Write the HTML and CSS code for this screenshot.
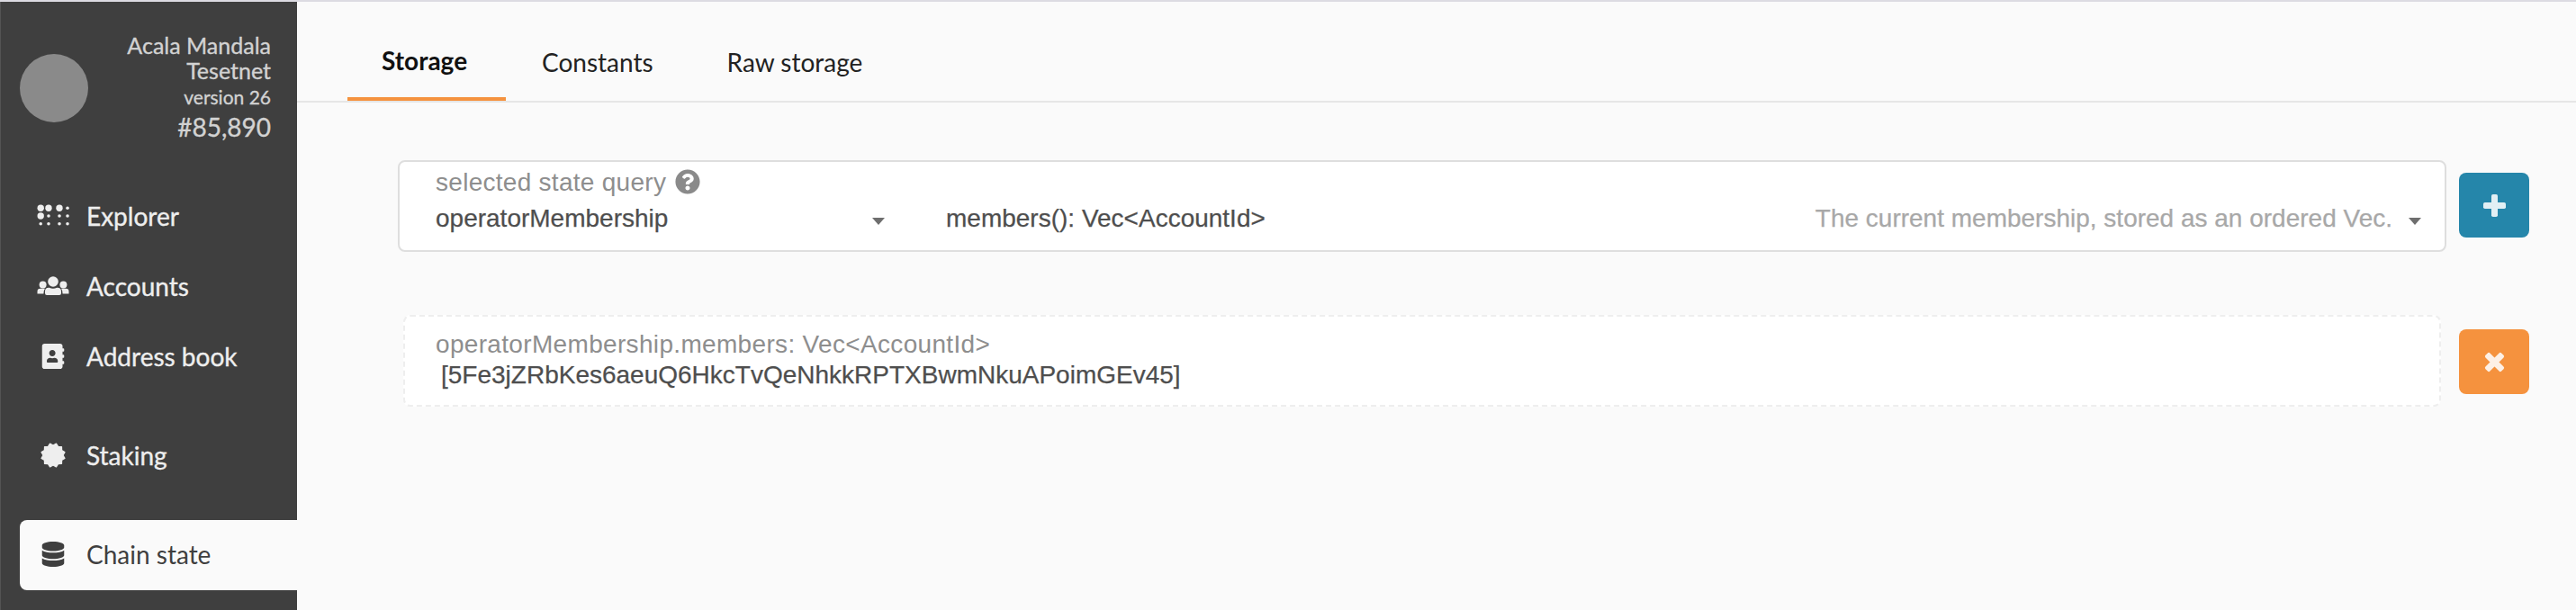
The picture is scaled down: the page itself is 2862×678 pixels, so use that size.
FILE: index.html
```html
<!DOCTYPE html>
<html lang="en">
<head>
<meta charset="utf-8">
<title>Chain state</title>
<link rel="stylesheet" href="styles.css">
</head>
<body>
<div class="app">
  <aside class="sidebar">
    <header class="chain">
      <span class="chain-logo"></span>
      <div class="chain-info">
        <div class="chain-name">Acala Mandala<br>Tesetnet</div>
        <div class="chain-version">version 26</div>
        <div class="chain-block">#85,890</div>
      </div>
    </header>
    <nav class="menu">
      <a class="menu-item">
        <svg class="icon" viewBox="0 0 36 28"><g transform="translate(0 1.500)"><circle cx="4.200" cy="3.700" r="3.700"/><circle cx="13" cy="3.700" r="3.700"/><circle cx="25" cy="3.700" r="3.700"/><circle cx="4.200" cy="12.500" r="3.700"/><circle cx="34" cy="3.700" r="1.800"/><circle cx="13" cy="12.500" r="1.800"/><circle cx="25" cy="12.500" r="1.800"/><circle cx="34" cy="12.500" r="1.800"/><circle cx="4.200" cy="21.300" r="1.800"/><circle cx="13" cy="21.300" r="1.800"/><circle cx="25" cy="21.300" r="1.800"/><circle cx="34" cy="21.300" r="1.800"/></g></svg>
        <span class="menu-label">Explorer</span>
      </a>
      <a class="menu-item">
        <svg class="icon" viewBox="0 0 36 28"><circle cx="6.600" cy="12.500" r="4"/><circle cx="29.400" cy="12.500" r="4"/><circle cx="18" cy="9" r="5.800"/><path d="M.5 22.500v-2.600q0-3.200 3.200-3.200h5.300q-1.400 1.500-1.600 5.800zM35.500 22.500v-2.600q0-3.200-3.200-3.200h-5.300q1.400 1.500 1.600 5.800zM9 22v-2q0-4.200 4.200-4.200h.6q4.200 1.800 8.400 0h.6q4.200 0 4.200 4.200v2q0 2-2 2h-14q-2 0-2-2z"/></svg>
        <span class="menu-label">Accounts</span>
      </a>
      <a class="menu-item">
        <svg class="icon" viewBox="-96 0 640 512"><path d="M436 160c6.600 0 12-5.400 12-12v-40c0-6.600-5.400-12-12-12h-20V48c0-26.500-21.500-48-48-48H48C21.500 0 0 21.500 0 48v416c0 26.500 21.500 48 48 48h320c26.500 0 48-21.500 48-48v-48h20c6.600 0 12-5.400 12-12v-40c0-6.600-5.400-12-12-12h-20v-64h20c6.600 0 12-5.400 12-12v-40c0-6.600-5.400-12-12-12h-20v-64h20zm-228-32c35.300 0 64 28.700 64 64s-28.700 64-64 64-64-28.700-64-64 28.700-64 64-64zm112 236.800c0 10.600-10 19.200-22.400 19.200H118.400C106 384 96 375.400 96 364.800v-19.200c0-31.800 30.100-57.600 67.200-57.600h5c12.300 5.100 25.700 8 39.800 8s27.600-2.900 39.800-8h5c37.100 0 67.200 25.800 67.200 57.600v19.200z"/></svg>
        <span class="menu-label">Address book</span>
      </a>
      <a class="menu-item spaced">
        <svg class="icon" viewBox="0 0 36 28"><path class="seal" d="M18 3L21.440 1.150 23.500 4.470 27.400 4.600 27.530 8.500 30.850 10.560 29 14 30.850 17.440 27.530 19.500 27.400 23.400 23.500 23.530 21.440 26.850 18 25 14.560 26.850 12.500 23.530 8.600 23.400 8.470 19.500 5.150 17.440 7 14 5.150 10.560 8.470 8.500 8.600 4.600 12.500 4.470 14.560 1.150z"/></svg>
        <span class="menu-label">Staking</span>
      </a>
      <a class="menu-item spaced active">
        <svg class="icon" viewBox="-96 0 640 512"><path d="M448 73.143v45.714C448 159.143 347.667 192 224 192S0 159.143 0 118.857V73.143C0 32.857 100.333 0 224 0s224 32.857 224 73.143zM448 176v102.857C448 319.143 347.667 352 224 352S0 319.143 0 278.857V176c48.125 33.143 136.208 48.572 224 48.572S399.874 209.143 448 176zm0 160v102.857C448 479.143 347.667 512 224 512S0 479.143 0 438.857V336c48.125 33.143 136.208 48.572 224 48.572S399.874 369.143 448 336z"/></svg>
        <span class="menu-label">Chain state</span>
      </a>
    </nav>
  </aside>
  <main class="content">
    <nav class="tabs">
      <a class="tab selected">Storage</a>
      <a class="tab">Constants</a>
      <a class="tab raw">Raw storage</a>
    </nav>
    <section class="row">
      <div class="query">
        <div class="module">
          <div class="label"><span class="label-text">selected state query</span><svg class="help" viewBox="0 0 512 512"><path d="M504 256c0 136.997-111.043 248-248 248S8 392.997 8 256C8 119.083 119.043 8 256 8s248 111.083 248 248zM262.655 90c-54.497 0-89.255 22.957-116.549 63.758-3.536 5.286-2.353 12.415 2.715 16.258l34.699 26.310c5.205 3.947 12.621 3.008 16.665-2.122 17.864-22.658 30.113-35.797 57.303-35.797 20.429 0 45.698 13.148 45.698 32.958 0 14.976-12.363 22.667-32.534 33.976C247.128 238.528 216 254.941 216 296v4c0 6.627 5.373 12 12 12h56c6.627 0 12-5.373 12-12v-1.333c0-28.462 83.186-29.647 83.186-106.667 0-58.002-60.165-102-116.531-102zM256 338c-25.365 0-46 20.635-46 46 0 25.364 20.635 46 46 46s46-20.636 46-46c0-25.364-20.635-46-46-46z"/></svg></div>
          <div class="select"><span class="module-name">operatorMembership</span><i class="caret"></i></div>
        </div>
        <div class="select method"><span class="method-name">members(): Vec&lt;AccountId&gt;</span><span class="method-doc">The current membership, stored as an ordered Vec.</span><i class="caret"></i></div>
      </div>
      <button class="btn add"><svg viewBox="0 0 25 25" width="25" height="25"><rect x="9" width="7" height="25" rx="1.800"/><rect y="9" width="25" height="7" rx="1.800"/></svg></button>
    </section>
    <section class="row result-row">
      <div class="result">
        <div class="result-label">operatorMembership.members: Vec&lt;AccountId&gt;</div>
        <div class="result-value">[5Fe3jZRbKes6aeuQ6HkcTvQeNhkkRPTXBwmNkuAPoimGEv45]</div>
      </div>
      <button class="btn remove"><svg viewBox="0 0 25 25" width="25" height="25"><g transform="rotate(45 12.500 12.500)"><rect x="9" width="7" height="25" rx="1.800"/><rect y="9" width="25" height="7" rx="1.800"/></g></svg></button>
    </section>
  </main>
</div>
</body>
</html>
```
FILE: styles.css
```css
* { box-sizing: border-box; }
body { margin: 0; background: #fafafa; font-family: Lato, sans-serif; font-size: 28px; }
.app { display: flex; height: 678px; border-top: 2px solid #dcdbe2; overflow: hidden; }
.sidebar { width: 330px; flex: none; background: #3f3f3f; border-left: 1px solid #545454; color: #eee; -webkit-text-stroke: .35px currentColor; }
.chain { height: 200px; display: flex; justify-content: space-between; align-items: flex-start; padding: 34px 29px 0 21px; color: #d2d2d2; }
.chain-logo { width: 76px; height: 76px; margin-top: 24px; border-radius: 50%; background: #8a8a8a; }
.chain-info { text-align: right; white-space: nowrap; }
.chain-name { font-size: 25px; line-height: 28px; }
.chain-version { margin-top: 2px; font-size: 21px; line-height: 28px; }
.chain-block { font-size: 28px; line-height: 38px; }
.menu { display: flex; flex-direction: column; padding-left: 21px; }
.menu-item { display: flex; align-items: center; height: 78px; padding-left: 19px; }
.menu-item.spaced { margin-top: 32px; }
.icon { width: 36px; height: 28px; margin-bottom: 3px; fill: currentColor; }
.seal { stroke: currentColor; stroke-width: 1.4px; stroke-linejoin: round; }
.menu-label { margin: 0 0 3px 19px; line-height: 34px; white-space: nowrap; }
.active { background: #fafafa; color: #3f3f3f; border-radius: 8px 0 0 8px; -webkit-text-stroke: 0; }
.content { flex: 1; min-width: 0; }
.tabs { display: flex; height: 112px; padding-left: 56px; border-bottom: 2px solid #e6e6e6; color: #222; }
.tab { height: 110px; padding: 50px 40px 0; line-height: 34px; white-space: nowrap; }
.tab.selected { padding: 48px 38px 0; border-bottom: 4px solid #f5923e; color: #111; font-weight: 700; width: 176px; }
.tab.raw { padding-left: 42px; }
.row { display: flex; align-items: flex-start; padding: 64px 52px 0 112px; font-family: "Liberation Sans", Arial, sans-serif; }
.query { display: flex; width: 2276px; height: 102px; margin-right: 14px; background: #fff; border: 2px solid #dedede; border-radius: 8px; color: #4e4e4e; }
.module { width: 566px; padding: 6px 27px 0 40px; }
.label { display: flex; align-items: center; height: 34px; color: #8e8e8e; }
.label-text { letter-spacing: .28px; }
.help { width: 28px; height: 28px; margin: 0 0 2px 10px; fill: #8a8a8a; }
.select { display: flex; align-items: center; height: 38px; white-space: nowrap; -webkit-text-stroke: .25px currentColor; }
.module .select { margin-top: 4px; }
.method { flex: 1; margin-top: 44px; padding: 0 26px 0 41px; }
.caret { margin: 6px 0 0 auto; border: 7px solid transparent; border-top: 8px solid #6e6e6e; border-bottom: 0; }
.method-doc { margin-left: auto; color: #a8a8a8; }
.method .caret { margin-left: 18px; }
.btn { display: flex; align-items: center; justify-content: center; width: 78px; height: 72px; margin-top: 14px; padding: 0; border: 0; border-radius: 8px; }
.btn svg { fill: #fff; opacity: .87; }
.add { background: #2586aa; }
.remove { background: #f5923e; margin-top: 16px; }
.result-row { padding: 70px 52px 0 118px; }
.result { width: 2264px; height: 102px; margin-right: 20px; padding: 14px 34px; background: #fff; border: 2px dashed #eee; border-radius: 8px; white-space: nowrap; }
.result-label { line-height: 34px; color: #8e8e8e; letter-spacing: .33px; }
.result-value { padding-left: 6px; line-height: 34px; color: #4e4e4e; -webkit-text-stroke: .25px currentColor; }
```
